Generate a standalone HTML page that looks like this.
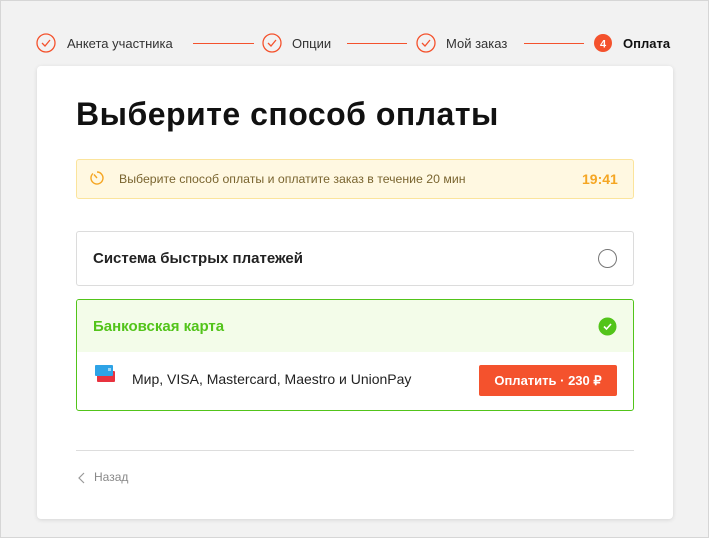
<!DOCTYPE html>
<html><head><meta charset="utf-8"><style>
*{margin:0;padding:0;box-sizing:border-box}
body{width:709px;height:538px;background:#f2f2f2;font-family:"Liberation Sans",sans-serif;position:relative;overflow:hidden}
.frame{position:absolute;left:0;top:0;width:709px;height:538px;border:1px solid #d6d6d6;pointer-events:none}
.a{position:absolute;white-space:nowrap}
.st{font-size:13px;color:#333;top:36px}
.ln{position:absolute;top:43px;height:1px;background:#f4522d}
.card{position:absolute;left:37px;top:66px;width:636px;height:453px;background:#fff;border-radius:4px;box-shadow:0 1px 4px rgba(0,0,0,.12)}
</style></head><body>
<div class="frame"></div>
<svg class="a" style="left:0;top:0" width="709" height="60">
<g fill="none" stroke="#f4522d" stroke-width="1.3">
<circle cx="46" cy="43" r="9"/><path d="M42 43l3 3 5-6"/>
<circle cx="272" cy="43" r="9"/><path d="M268 43l3 3 5-6"/>
<circle cx="426" cy="43" r="9"/><path d="M422 43l3 3 5-6"/>
</g>
<circle cx="603" cy="43" r="9" fill="#f4522d"/>
<text x="603" y="47.5" fill="#fff" font-size="11" font-weight="bold" text-anchor="middle" font-family="Liberation Sans">4</text>
</svg>
<div class="a st" style="left:67px">Анкета участника</div>
<div class="ln" style="left:193px;width:61px"></div>
<div class="a st" style="left:292px">Опции</div>
<div class="ln" style="left:347px;width:60px"></div>
<div class="a st" style="left:446px">Мой заказ</div>
<div class="ln" style="left:524px;width:60px"></div>
<div class="a st" style="left:623px;font-weight:bold;color:#111">Оплата</div>
<div class="card"></div>
<div class="a" style="left:76px;top:96px;font-size:32px;font-weight:bold;color:#111;letter-spacing:0.5px">Выберите способ оплаты</div>
<div class="a" style="left:76px;top:159px;width:558px;height:40px;background:#fff8e1;border:1px solid #fbe49c;border-radius:3px"></div>
<svg class="a" style="left:88px;top:169px" width="18" height="18"><g fill="none" stroke="#f5a623" stroke-width="1.4"><path d="M5 4.5A6 6 0 1 0 9 3"/><path d="M9 9L6 5.5"/></g></svg>
<div class="a" style="left:119px;top:172px;font-size:12.3px;color:#7a6530">Выберите способ оплаты и оплатите заказ в течение 20 мин</div>
<div class="a" style="left:582px;top:171px;font-size:14px;font-weight:bold;color:#f5a623">19:41</div>
<div class="a" style="left:76px;top:231px;width:558px;height:55px;border:1px solid #dcdcdc;border-radius:3px"></div>
<div class="a" style="left:93px;top:250px;font-size:15px;font-weight:bold;color:#222">Система быстрых платежей</div>
<div class="a" style="left:598px;top:249px;width:19px;height:19px;border:1.3px solid #777;border-radius:50%"></div>
<div class="a" style="left:76px;top:299px;width:558px;height:112px;border:1px solid #52c41a;border-radius:3px;overflow:hidden"><div style="height:52px;background:#f3fce9"></div></div>
<div class="a" style="left:93px;top:318px;font-size:15px;font-weight:bold;color:#52c41a">Банковская карта</div>
<svg class="a" style="left:598px;top:317px" width="19" height="19"><circle cx="9.5" cy="9.5" r="9" fill="#52c41a"/><path d="M6 9.5l2.5 2.5 4.5-5" fill="none" stroke="#fff" stroke-width="1.6"/></svg>
<svg class="a" style="left:95px;top:364px" width="22" height="22"><rect x="2" y="7" width="18" height="11" rx="1" fill="#e8323f"/><rect x="0" y="1" width="18" height="11" rx="1" fill="#2ea3e6"/><rect x="13" y="4" width="3" height="3" fill="#9fd6f5"/></svg>
<div class="a" style="left:132px;top:371px;font-size:14px;color:#222">Мир, VISA, Mastercard, Maestro и UnionPay</div>
<div class="a" style="left:479px;top:365px;width:138px;height:31px;background:#f4522d;border-radius:2px;color:#fff;font-size:13px;font-weight:bold;text-align:center;line-height:32px">Оплатить · 230 ₽</div>
<div class="a" style="left:76px;top:450px;width:558px;height:1px;background:#ddd"></div>
<svg class="a" style="left:77px;top:472px" width="10" height="12"><path d="M7 1L2 6l5 5" fill="none" stroke="#999" stroke-width="1.2"/></svg>
<div class="a" style="left:94px;top:470px;font-size:12px;color:#888">Назад</div>
</body></html>
